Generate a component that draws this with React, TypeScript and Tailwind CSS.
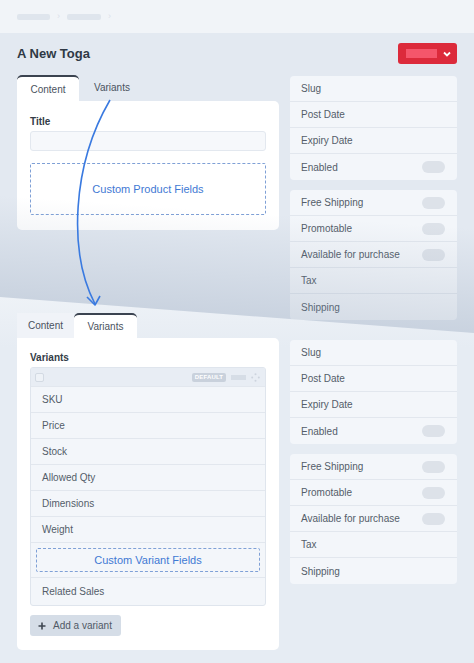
import React from "react";

const rowText = "text-[10px] text-[#545d69]";

function Toggle() {
  return <span className="block h-[12px] w-[23px] rounded-full bg-[#dde2e9]" />;
}

function SidePanel({ rows }: { rows: { label: string; toggle?: boolean }[] }) {
  return (
    <div className="rounded-[4px] bg-[#f3f6fa]">
      {rows.map((r, i) => (
        <div
          key={r.label}
          className={`flex h-[26px] items-center justify-between pl-[11px] pr-[12px] ${
            i < rows.length - 1 ? "border-b border-[#e2e7ee]" : ""
          }`}
        >
          <span className={rowText}>{r.label}</span>
          {r.toggle && <Toggle />}
        </div>
      ))}
    </div>
  );
}

function SideColumn() {
  return (
    <div className="flex w-[167px] flex-col gap-[10px]">
      <SidePanel
        rows={[
          { label: "Slug" },
          { label: "Post Date" },
          { label: "Expiry Date" },
          { label: "Enabled", toggle: true },
        ]}
      />
      <SidePanel
        rows={[
          { label: "Free Shipping", toggle: true },
          { label: "Promotable", toggle: true },
          { label: "Available for purchase", toggle: true },
          { label: "Tax" },
          { label: "Shipping" },
        ]}
      />
    </div>
  );
}

function Crumbs() {
  return (
    <div className="flex h-[33px] items-center gap-[7px] bg-[#f1f4f8] px-[17px]">
      <span className="h-[6px] w-[33px] rounded-[2px] bg-[#dfe5ed]" />
      <span className="text-[9px] leading-none text-[#dbe1ea]">›</span>
      <span className="h-[6px] w-[34px] rounded-[2px] bg-[#dfe5ed]" />
      <span className="text-[9px] leading-none text-[#dbe1ea]">›</span>
    </div>
  );
}

function VariantTable() {
  const rows = ["SKU", "Price", "Stock", "Allowed Qty", "Dimensions", "Weight"];
  return (
    <div className="overflow-hidden rounded-[3px] border border-[#dfe5ed] bg-[#f3f6fa]">
      <div className="flex h-[18px] items-center justify-between bg-[#e8edf4] pl-[4px] pr-[5px]">
        <span className="h-[9px] w-[9px] rounded-[2px] border border-[#d3dae3] bg-[#eef2f7]" />
        <div className="flex items-center gap-[5px]">
          <span className="flex h-[9px] w-[34px] items-center justify-center rounded-[2px] bg-[#c9d1dc] text-[6px] font-bold leading-none tracking-wide text-white">
            DEFAULT
          </span>
          <span className="h-[5px] w-[15px] bg-[#d6dde6]" />
          <svg width="9" height="9" viewBox="0 0 9 9" fill="#cdd4de">
            <circle cx="4.5" cy="1.2" r="1" />
            <circle cx="4.5" cy="7.8" r="1" />
            <circle cx="1.2" cy="4.5" r="1" />
            <circle cx="7.8" cy="4.5" r="1" />
          </svg>
        </div>
      </div>
      {rows.map((r) => (
        <div key={r} className="flex h-[26px] items-center border-t border-[#e2e7ee] px-[11px]">
          <span className={rowText}>{r}</span>
        </div>
      ))}
      <div className="border-t border-[#e2e7ee] px-[5px] py-[5px]">
        <div className="flex h-[24px] items-center justify-center rounded-[2px] border border-dashed border-[#7fa0d6] text-[11px] text-[#3f79d4]">
          Custom Variant Fields
        </div>
      </div>
      <div className="flex h-[28px] items-center border-t border-[#e2e7ee] px-[11px]">
        <span className={rowText}>Related Sales</span>
      </div>
    </div>
  );
}

export default function App() {
  return (
    <div className="relative h-[663px] w-[474px] overflow-hidden bg-[#e6ecf3] font-['Liberation_Sans',Arial,sans-serif]">
      {/* upper page, cut diagonally */}
      <div className="relative z-10 h-[335px] bg-[#e3e9f1] [clip-path:polygon(0_0,100%_0,100%_333px,0_297px)]">
        <Crumbs />
        <div className="px-[17px]">
          <div className="mt-[10px] flex h-[21px] items-center justify-between">
            <h1 className="text-[13px] font-bold text-[#2f3945]">A New Toga</h1>
            <button className="flex h-[21px] w-[59px] items-center gap-[6px] rounded-[3px] bg-[#dc2a3b] pl-[8px]">
              <span className="h-[9px] w-[31px] bg-[#f5566b]" />
              <svg width="8" height="6" viewBox="0 0 8 6" fill="none">
                <path d="M1 1.5 L4 4.5 L7 1.5" stroke="white" strokeWidth="1.8" />
              </svg>
            </button>
          </div>
          <div className="mt-[11px] flex gap-[11px]">
            <div className="w-[262px]">
              <div className="flex h-[26px] items-end">
                <div className="flex h-[26px] w-[62px] items-center justify-center rounded-t-[5px] border-t-2 border-[#3b4350] bg-white text-[10px] text-[#4a525e]">
                  Content
                </div>
                <div className="flex h-[26px] w-[66px] items-center justify-center pb-[2px] text-[10px] text-[#4a525e]">
                  Variants
                </div>
              </div>
              <div className="rounded-b-[5px] rounded-tr-[5px] bg-white px-[13px] pb-[15px] pt-[14px]">
                <div className="text-[10px] font-bold leading-[13px] text-[#333c47]">Title</div>
                <div className="mt-[3px] h-[20px] rounded-[3px] border border-[#e3e8ef] bg-[#f6f8fb]" />
                <div className="mt-[12px] flex h-[52px] items-center justify-center rounded-[2px] border border-dashed border-[#7fa0d6] text-[11px] text-[#3f79d4]">
                  Custom Product Fields
                </div>
              </div>
            </div>
            <div className="pt-[1px]">
              <SideColumn />
            </div>
          </div>
        </div>
        {/* page curl shading */}
        <div className="pointer-events-none absolute inset-0 bg-[linear-gradient(184deg,transparent_62%,rgba(120,140,168,0.32)_100%)]" />
      </div>

      {/* lower page */}
      <div className="-mt-[38px] bg-[linear-gradient(180deg,#eef2f7_0px,#e6ecf3_50px)] px-[17px] pt-[16px]">
        <div className="flex gap-[11px]">
          <div className="w-[262px]">
            <div className="flex h-[25px] items-end">
              <div className="flex h-[25px] w-[57px] items-center justify-center bg-[#f0f3f8] text-[10px] text-[#4a525e]">
                Content
              </div>
              <div className="flex h-[25px] w-[63px] items-center justify-center rounded-t-[5px] border-t-2 border-[#3b4350] bg-white text-[10px] text-[#4a525e]">
                Variants
              </div>
            </div>
            <div className="rounded-b-[5px] rounded-tr-[5px] bg-white px-[13px] pb-[14px] pt-[13px]">
              <div className="mb-[3px] text-[10px] font-bold leading-[13px] text-[#333c47]">Variants</div>
              <VariantTable />
              <button className="mt-[9px] flex h-[21px] w-[91px] items-center gap-[7px] whitespace-nowrap rounded-[3px] bg-[#d5dde7] pl-[8px] text-[10px] text-[#505965]">
                <svg width="8" height="8" viewBox="0 0 8 8" fill="none">
                  <path d="M4 0.5 V7.5 M0.5 4 H7.5" stroke="#3f4752" strokeWidth="1.6" />
                </svg>
                Add a variant
              </button>
            </div>
          </div>
          <div className="pt-[27px]">
            <SideColumn />
          </div>
        </div>
      </div>

      {/* arrow linking the two tabs */}
      <svg
        className="pointer-events-none absolute left-0 top-0 z-20"
        width="474"
        height="663"
        viewBox="0 0 474 663"
        fill="none"
      >
        <path d="M110 100 C 72 165, 68 252, 95 304" stroke="#3a7ae0" strokeWidth="1.6" />
        <path d="M87 297 L95 305 L100 296" stroke="#3a7ae0" strokeWidth="1.6" strokeLinejoin="round" />
      </svg>
    </div>
  );
}
